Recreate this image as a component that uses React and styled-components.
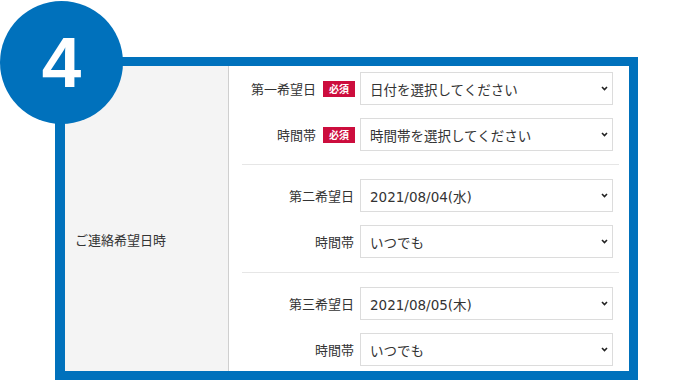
import React from "react";
import styled, { createGlobalStyle } from "styled-components";

const Global = createGlobalStyle`
  html, body { margin: 0; padding: 0; background: #fff; }
  body { width: 700px; height: 382px; overflow: hidden; font-family: "Noto Sans CJK JP", "Noto Sans", sans-serif; color: #333; }
`;

const BLUE = "#0071bc";

const Stage = styled.div`
  position: relative;
  width: 700px;
  height: 382px;
  padding: 57px 0 0 55px;
  box-sizing: border-box;
`;

const StepBadge = styled.div`
  position: absolute;
  left: 0;
  top: 1px;
  width: 123px;
  height: 123px;
  border-radius: 50%;
  background: ${BLUE};
  color: #fff;
  display: flex;
  align-items: center;
  justify-content: center;
  font-family: "Liberation Sans", Arial, sans-serif;
  font-weight: 700;
  font-size: 71px;
  line-height: 1;
  box-sizing: border-box;
  z-index: 2;
`;

const Frame = styled.div`
  width: 583px;
  height: 323px;
  box-sizing: border-box;
  border: 9px solid ${BLUE};
  border-left-width: 10px;
  display: flex;
  background: #fff;
`;

const HeadCell = styled.div`
  width: 164px;
  box-sizing: border-box;
  background: #f4f4f4;
  border-right: 1px solid #cfcfcf;
  display: flex;
  align-items: center;
  padding: 42px 0 0 10px;
  font-size: 13px;
  color: #333;
`;

const Body = styled.div`
  flex: 1;
  padding: 0 10px 0 13px;
  display: flex;
  flex-direction: column;
`;

const Group = styled.div`
  display: flex;
  flex-direction: column;
  gap: 13px;
  padding-top: ${(p) => p.$top}px;
  padding-bottom: ${(p) => p.$bottom}px;
  border-top: ${(p) => (p.$line ? "1px solid #e6e6e6" : "none")};
`;

const Row = styled.div`
  display: flex;
  align-items: center;
  padding-right: 6px;
`;

const Label = styled.div`
  flex: 1;
  display: flex;
  justify-content: flex-end;
  align-items: center;
  gap: 7px;
  font-size: 13px;
  color: #333;
  padding-right: ${(p) => (p.$badge ? 5 : 6)}px;
`;

const Required = styled.span`
  display: inline-flex;
  align-items: center;
  justify-content: center;
  width: 32px;
  height: 16px;
  background: #cc0d3d;
  color: #fff;
  font-size: 10px;
  font-weight: 700;
  line-height: 1;
`;

const SelectBox = styled.div`
  width: 253px;
  height: 33px;
  box-sizing: border-box;
  border: 1px solid #dcdcdc;
  background: #fff;
  display: flex;
  align-items: center;
  justify-content: space-between;
  padding: 0 4px 0 9px;
  font-family: "DejaVu Sans", "Noto Sans CJK JP", sans-serif;
  font-size: 13.5px;
  color: #333;
`;

const Chevron = () => (
  <svg width="7" height="5" viewBox="0 0 7 5" aria-hidden="true">
    <path d="M1 1 L3.5 3.5 L6 1" fill="none" stroke="#222" strokeWidth="1.6" />
  </svg>
);

const Field = ({ label, required, value }) => (
  <Row>
    <Label $badge={required}>
      <span>{label}</span>
      {required && <Required>必須</Required>}
    </Label>
    <SelectBox>
      <span>{value}</span>
      <Chevron />
    </SelectBox>
  </Row>
);

const groups = [
  {
    top: 6, bottom: 13, line: false,
    rows: [
      { label: "第一希望日", required: true, value: "日付を選択してください" },
      { label: "時間帯", required: true, value: "時間帯を選択してください" },
    ],
  },
  {
    top: 14, bottom: 14, line: true,
    rows: [
      { label: "第二希望日", value: "2021/08/04(水)" },
      { label: "時間帯", value: "いつでも" },
    ],
  },
  {
    top: 14, bottom: 5, line: true,
    rows: [
      { label: "第三希望日", value: "2021/08/05(木)" },
      { label: "時間帯", value: "いつでも" },
    ],
  },
];

export default function App() {
  return (
    <Stage>
      <Global />
      <StepBadge>4</StepBadge>
      <Frame>
        <HeadCell>ご連絡希望日時</HeadCell>
        <Body>
          {groups.map((g, i) => (
            <Group key={i} $top={g.top} $bottom={g.bottom} $line={g.line}>
              {g.rows.map((r, j) => (
                <Field key={j} {...r} />
              ))}
            </Group>
          ))}
        </Body>
      </Frame>
    </Stage>
  );
}
